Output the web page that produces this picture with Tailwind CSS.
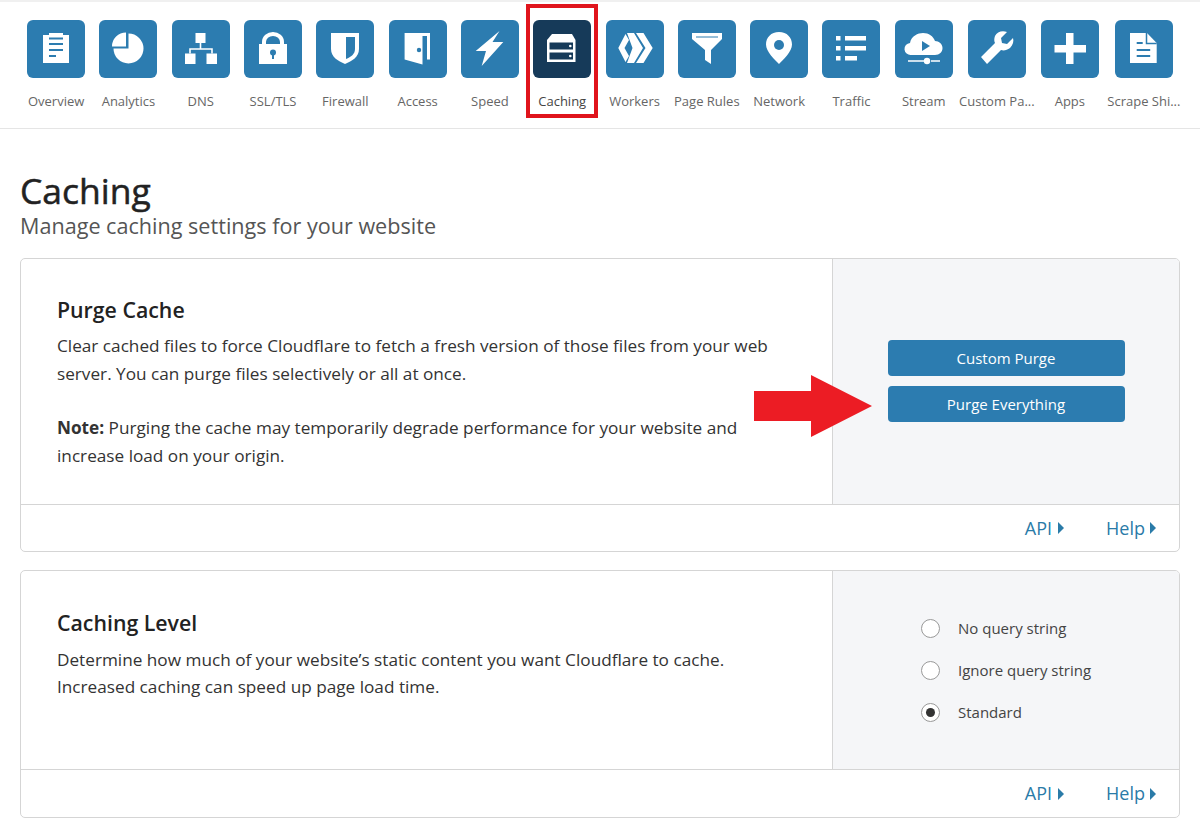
<!DOCTYPE html>
<html lang="en">
<head>
    <meta charset="UTF-8">
    <title>Caching</title>
    <script src="https://cdn.jsdelivr.net/npm/@tailwindcss/browser@4"></script>
</head>
<body class="bg-white font-['Open_Sans',sans-serif] text-[#333]">
    <!-- top nav -->
    <nav class="flex pl-5 pt-5 h-[129px] border-t-2 border-[#f0f0f0] border-b border-b-[#e5e5e5] box-border">
        <a class="w-[72.3px] flex flex-col items-center shrink-0 -mt-[2px]">
            <svg class="w-[58px] h-[58px]" viewBox="0 0 58 58"><rect width="58" height="58" rx="6" fill="#2c7cb0"/><path fill="#fff" d="M16 15h6v-2h14v2h6v28H16z"/><path stroke="#2c7cb0" stroke-width="2" d="M22 18.500h14M22 24h14M22 30h14M22 36h7"/></svg>
            <span class="mt-[14px] text-[13px] text-[#666] whitespace-nowrap">Overview</span>
        </a>
        <a class="w-[72.3px] flex flex-col items-center shrink-0 -mt-[2px]">
            <svg class="w-[58px] h-[58px]" viewBox="0 0 58 58"><rect width="58" height="58" rx="6" fill="#2c7cb0"/><path fill="#fff" d="M29.500 13.500A15 15 0 1 1 14.500 28.500H29.500zM13 26.500A14 14 0 0 1 27 12.500V26.500z"/></svg>
            <span class="mt-[14px] text-[13px] text-[#666] whitespace-nowrap">Analytics</span>
        </a>
        <a class="w-[72.3px] flex flex-col items-center shrink-0 -mt-[2px]">
            <svg class="w-[58px] h-[58px]" viewBox="0 0 58 58"><rect width="58" height="58" rx="6" fill="#2c7cb0"/><path fill="#fff" d="M23.500 13h10v10h-10zM13 33.500h10.500V44H13zM34.500 33.500H45V44H34.500z"/><path fill="none" stroke="#fff" stroke-width="1.600" d="M28.500 23v6M18 33.500V29h22v4.500"/></svg>
            <span class="mt-[14px] text-[13px] text-[#666] whitespace-nowrap">DNS</span>
        </a>
        <a class="w-[72.3px] flex flex-col items-center shrink-0 -mt-[2px]">
            <svg class="w-[58px] h-[58px]" viewBox="0 0 58 58"><rect width="58" height="58" rx="6" fill="#2c7cb0"/><path fill="none" stroke="#fff" stroke-width="4" d="M20 25v-3a9 8 0 0 1 18 0v3"/><path fill="#fff" d="M15 24h28v20H15z"/><circle cx="29" cy="32.500" r="3" fill="#2c7cb0"/><path fill="#2c7cb0" d="M28 33h2v6h-2z"/></svg>
            <span class="mt-[14px] text-[13px] text-[#666] whitespace-nowrap">SSL/TLS</span>
        </a>
        <a class="w-[72.3px] flex flex-col items-center shrink-0 -mt-[2px]">
            <svg class="w-[58px] h-[58px]" viewBox="0 0 58 58"><rect width="58" height="58" rx="6" fill="#2c7cb0"/><path fill="#fff" d="M15 13h28v16c0 8-7 12-14 15-7-3-14-7-14-15z"/><path fill="#2c7cb0" d="M30 17h9v12c0 5-4 8-9 10z"/></svg>
            <span class="mt-[14px] text-[13px] text-[#666] whitespace-nowrap">Firewall</span>
        </a>
        <a class="w-[72.3px] flex flex-col items-center shrink-0 -mt-[2px]">
            <svg class="w-[58px] h-[58px]" viewBox="0 0 58 58"><rect width="58" height="58" rx="6" fill="#2c7cb0"/><path fill="#fff" d="M15.600 13H41V39.500H38V16H33.500V44.500L15.600 39.500z"/><circle cx="30" cy="30" r="2.200" fill="#2c7cb0"/></svg>
            <span class="mt-[14px] text-[13px] text-[#666] whitespace-nowrap">Access</span>
        </a>
        <a class="w-[72.3px] flex flex-col items-center shrink-0 -mt-[2px]">
            <svg class="w-[58px] h-[58px]" viewBox="0 0 58 58"><rect width="58" height="58" rx="6" fill="#2c7cb0"/><path fill="#fff" d="M38.500 11L14.700 31H25L20.700 46L42.300 22H31.500z"/></svg>
            <span class="mt-[14px] text-[13px] text-[#666] whitespace-nowrap">Speed</span>
        </a>
        <a class="w-[72.3px] flex flex-col items-center shrink-0 -mt-[2px]">
            <svg class="w-[58px] h-[58px]" viewBox="0 0 58 58"><rect width="58" height="58" rx="6" fill="#163a59"/><path fill="#fff" d="M19 14h20l3.500 6v22h-28.500V20z"/><path fill="#163a59" d="M16.500 22.500h23.500v7H16.500zM16.500 32.500h23.500v7H16.500z"/><circle cx="37.300" cy="26" r="1.300" fill="#fff"/><circle cx="37.300" cy="36" r="1.300" fill="#fff"/></svg>
            <span class="mt-[14px] text-[13px] text-[#444] whitespace-nowrap">Caching</span>
        </a>
        <a class="w-[72.3px] flex flex-col items-center shrink-0 -mt-[2px]">
            <svg class="w-[58px] h-[58px]" viewBox="0 0 58 58"><rect width="58" height="58" rx="6" fill="#2c7cb0"/><path fill="#fff" d="M12.300 28L19.500 14L23 20L18.500 28L23 36L19.500 42zM21 13H28L37 28L28 43H21L26.500 28zM30 13H37.500L46.700 28L37.500 43H30L39.500 28z"/></svg>
            <span class="mt-[14px] text-[13px] text-[#666] whitespace-nowrap">Workers</span>
        </a>
        <a class="w-[72.3px] flex flex-col items-center shrink-0 -mt-[2px]">
            <svg class="w-[58px] h-[58px]" viewBox="0 0 58 58"><rect width="58" height="58" rx="6" fill="#2c7cb0"/><path fill="#fff" d="M14 13h30v6L33 30v14l-6-4V30L14 19z"/><path stroke="#2c7cb0" d="M18 17h22"/></svg>
            <span class="mt-[14px] text-[13px] text-[#666] whitespace-nowrap">Page Rules</span>
        </a>
        <a class="w-[72.3px] flex flex-col items-center shrink-0 -mt-[2px]">
            <svg class="w-[58px] h-[58px]" viewBox="0 0 58 58"><rect width="58" height="58" rx="6" fill="#2c7cb0"/><path fill="#fff" d="M29 12c-8 0-13 5.500-13 12.500S25 40 29 44c4-4 13-12.500 13-19.500S37 12 29 12z"/><circle cx="29" cy="25" r="5" fill="#2c7cb0"/></svg>
            <span class="mt-[14px] text-[13px] text-[#666] whitespace-nowrap">Network</span>
        </a>
        <a class="w-[72.3px] flex flex-col items-center shrink-0 -mt-[2px]">
            <svg class="w-[58px] h-[58px]" viewBox="0 0 58 58"><rect width="58" height="58" rx="6" fill="#2c7cb0"/><path fill="#fff" d="M14 16h4.500v4.500H14zM23 16h21v4.500H23zM14 26h4.500v4.500H14zM23 26h21v4.500H23zM14 36h4.500v4.500H14zM23 36h12v4.500H23z"/></svg>
            <span class="mt-[14px] text-[13px] text-[#666] whitespace-nowrap">Traffic</span>
        </a>
        <a class="w-[72.3px] flex flex-col items-center shrink-0 -mt-[2px]">
            <svg class="w-[58px] h-[58px]" viewBox="0 0 58 58"><rect width="58" height="58" rx="6" fill="#2c7cb0"/><path fill="#fff" d="M16 35a6 6 0 0 1-1-12c1-7 8-10 13-10 6 0 10 3 12 8 4 0 7.500 3 7.500 7s-3 7-7.500 7z"/><path fill="#2c7cb0" d="M27 21l8 5-8 5z"/><path stroke="#fff" stroke-width="1.500" d="M13 41h16M36 41h9"/><circle cx="32" cy="41" r="3.200" fill="#fff"/></svg>
            <span class="mt-[14px] text-[13px] text-[#666] whitespace-nowrap">Stream</span>
        </a>
        <a class="w-[74px] flex flex-col items-center shrink-0 -mt-[2px]">
            <svg class="w-[58px] h-[58px]" viewBox="0 0 58 58"><rect width="58" height="58" rx="6" fill="#2c7cb0"/><path fill="#fff" d="M45 18l-6 6-5-1-1-5 6-6c-5-2-10 0-12 4-1 3-1 5 0 7L13 37l6 7 14-14c3 1 6 0 9-2 3-3 4-7 3-10z"/></svg>
            <span class="mt-[14px] text-[13px] text-[#666] whitespace-nowrap">Custom Pa...</span>
        </a>
        <a class="w-[72px] flex flex-col items-center shrink-0 -mt-[2px]">
            <svg class="w-[58px] h-[58px]" viewBox="0 0 58 58"><rect width="58" height="58" rx="6" fill="#2c7cb0"/><path fill="#fff" d="M25 13h7.500v12H45v7.500H32.500V44H25V32.500H13.500V25H25z"/></svg>
            <span class="mt-[14px] text-[13px] text-[#666] whitespace-nowrap">Apps</span>
        </a>
        <a class="w-[76px] flex flex-col items-center shrink-0 -mt-[2px]">
            <svg class="w-[58px] h-[58px]" viewBox="0 0 58 58"><rect width="58" height="58" rx="6" fill="#2c7cb0"/><path fill="#fff" d="M15 13h17l9.700 10V43H15z"/><path fill="none" stroke="#2c7cb0" stroke-width="1.500" d="M31.500 13v10.500h10.200"/><path fill="none" stroke="#2c7cb0" stroke-width="1.800" d="M21.700 23h6M21.700 30h13.500M21.700 36h13.500"/></svg>
            <span class="mt-[14px] text-[13px] text-[#666] whitespace-nowrap">Scrape Shi...</span>
        </a>
    </nav>
    <div class="absolute left-[526px] top-[4px] w-[72px] h-[114px] border-4 border-[#e0141c]"></div>

    <main class="px-5">
        <h1 class="mt-[40px] text-[35.500px] leading-[42px] font-medium text-[#222] [-webkit-text-stroke:0.5px_#222]">Caching</h1>
        <p class="text-[21.600px] leading-[29px] text-[#555]">Manage caching settings for your website</p>

        <section class="mt-[18px] border border-[#d5d5d5] rounded-[5px] overflow-hidden">
            <div class="flex h-[246px] border-b border-[#d5d5d5]">
                <div class="w-[811px] pl-[36px] pr-[50px] pt-[36px] text-[17.200px] leading-[27.500px]">
                    <h3 class="text-[21.300px] leading-[30px] font-semibold text-[#222] mb-[7px]">Purge Cache</h3>
                    <p>Clear cached files to force Cloudflare to fetch a fresh version of those files from your web server. You can purge files selectively or all at once.</p>
                    <p class="mt-[27px]"><b class="font-bold">Note:</b> Purging the cache may temporarily degrade performance for your website and increase load on your origin.</p>
                </div>
                <div class="flex-1 border-l border-[#d5d5d5] bg-[#f5f6f8] flex flex-col items-center pt-[81px] gap-[10px]">
                    <button class="w-[237px] h-[36px] rounded-[4px] bg-[#2c7cb0] text-white text-[15px]">Custom Purge</button>
                    <button class="w-[237px] h-[36px] rounded-[4px] bg-[#2c7cb0] text-white text-[15px]">Purge Everything</button>
                </div>
            </div>
            <div class="flex justify-end items-center gap-[42px] h-[46px] pr-[23px] text-[18px] text-[#2a7ba8]">
                <a class="flex items-center gap-[6px]">API <span class="w-0 h-0 border-y-[6px] border-y-transparent border-l-[6px] border-l-[#2a7ba8]"></span></a>
                <a class="flex items-center gap-[5px]">Help <span class="w-0 h-0 border-y-[6px] border-y-transparent border-l-[6px] border-l-[#2a7ba8]"></span></a>
            </div>
        </section>

        <section class="mt-[18px] border border-[#d5d5d5] rounded-[5px] overflow-hidden">
            <div class="flex h-[199px] border-b border-[#d5d5d5]">
                <div class="w-[811px] pl-[36px] pr-[50px] pt-[37px] text-[17.200px] leading-[27px]">
                    <h3 class="text-[21.300px] leading-[30px] font-semibold text-[#222] mb-[8px]">Caching Level</h3>
                    <p>Determine how much of your website’s static content you want Cloudflare to cache. Increased caching can speed up page load time.</p>
                </div>
                <div class="flex-1 border-l border-[#d5d5d5] bg-[#f5f6f8] pl-[88px] pt-[47px] flex flex-col gap-[22px] text-[15px] text-[#444]">
                    <label class="flex items-center gap-[18px] h-[20px]"><span class="w-[19px] h-[19px] rounded-full border border-[#999] bg-white"></span>No query string</label>
                    <label class="flex items-center gap-[18px] h-[20px]"><span class="w-[19px] h-[19px] rounded-full border border-[#999] bg-white"></span>Ignore query string</label>
                    <label class="flex items-center gap-[18px] h-[20px]"><span class="w-[19px] h-[19px] rounded-full border border-[#999] bg-white flex items-center justify-center"><span class="w-[9px] h-[9px] rounded-full bg-[#333]"></span></span>Standard</label>
                </div>
            </div>
            <div class="flex justify-end items-center gap-[42px] h-[47px] pr-[23px] text-[18px] text-[#2a7ba8]">
                <a class="flex items-center gap-[6px]">API <span class="w-0 h-0 border-y-[6px] border-y-transparent border-l-[6px] border-l-[#2a7ba8]"></span></a>
                <a class="flex items-center gap-[5px]">Help <span class="w-0 h-0 border-y-[6px] border-y-transparent border-l-[6px] border-l-[#2a7ba8]"></span></a>
            </div>
        </section>
    </main>

    <!-- red annotation arrow -->
    <svg class="absolute left-[754px] top-[375px]" width="118" height="62" viewBox="0 0 118 62"><path fill="#ec1c24" d="M0 16h57V0l61 31-61 31V46H0z"/></svg>
</body>
</html>
